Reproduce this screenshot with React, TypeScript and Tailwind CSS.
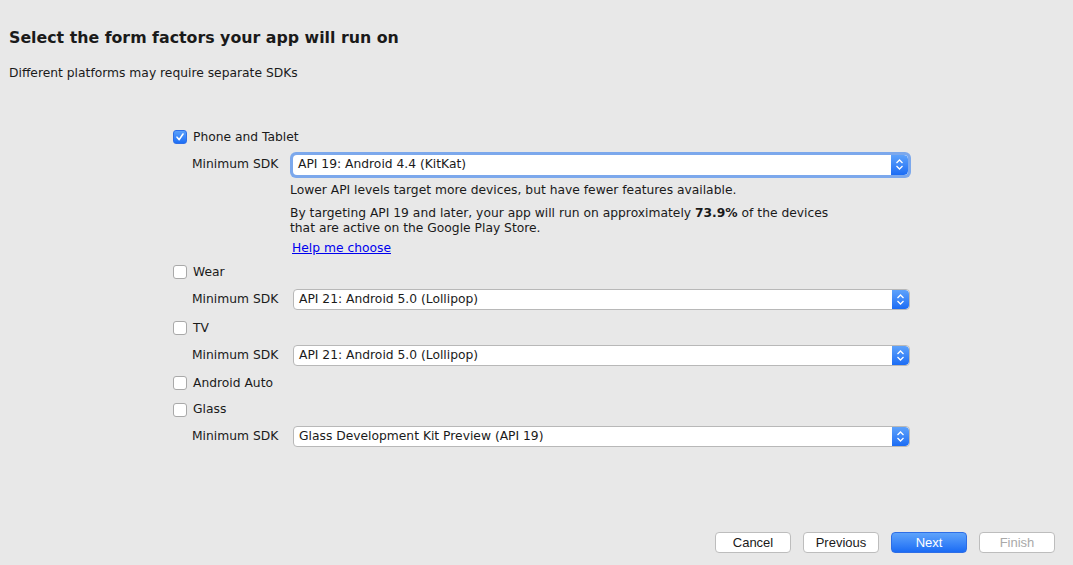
import React from "react";

const font = { fontFamily: '"DejaVu Sans", Verdana, sans-serif' };

function Checkbox({ checked }: { checked?: boolean }) {
  if (checked) {
    return (
      <div className="flex h-[14px] w-[14px] items-center justify-center rounded-[3px] border border-[#2f6fe8] bg-gradient-to-b from-[#5aa0fb] to-[#1c6ef5]">
        <svg width="10" height="10" viewBox="0 0 10 10">
          <path d="M2 5.2 L4.2 7.6 L8 2" fill="none" stroke="white" strokeWidth="1.6" strokeLinecap="round" strokeLinejoin="round" />
        </svg>
      </div>
    );
  }
  return <div className="h-[14px] w-[14px] rounded-[3px] border border-[#a9a9a9] bg-white" />;
}

function Arrows() {
  return (
    <div className="flex h-full w-[17px] items-center justify-center rounded-r-[4px] bg-gradient-to-b from-[#5ea2fb] to-[#1b6cf4]">
      <svg width="9" height="13" viewBox="0 0 9 13">
        <path d="M1.5 5 L4.5 2 L7.5 5 M1.5 8 L4.5 11 L7.5 8" fill="none" stroke="white" strokeWidth="1.3" />
      </svg>
    </div>
  );
}

function Select({ value, focused }: { value: string; focused?: boolean }) {
  if (focused) {
    return (
      <div className="ml-[10px] rounded-[6px] bg-[#7ca8ec] p-[3px]">
        <div className="flex h-[20px] w-[615px] items-center overflow-hidden rounded-[4px] bg-white">
          <span className="flex-1 pl-[5px] text-[12.3px] text-[#1a1a1a]">{value}</span>
          <Arrows />
        </div>
      </div>
    );
  }
  return (
    <div className="ml-[13px] flex h-[21px] w-[617px] items-center overflow-hidden rounded-[4px] border border-[#b8b8b8] bg-white">
      <span className="flex-1 pl-[5px] text-[12.3px] text-[#1a1a1a]">{value}</span>
      <Arrows />
    </div>
  );
}

function CheckRow({ label, checked, h }: { label: string; checked?: boolean; h: string }) {
  return (
    <div className={`flex items-center ${h}`}>
      <Checkbox checked={checked} />
      <span className="ml-[6px] text-[12.3px] text-[#1a1a1a]">{label}</span>
    </div>
  );
}

function SdkRow({ value, focused }: { value: string; focused?: boolean }) {
  return (
    <div className="flex h-[28px] items-center pl-[19px] pb-[1px]">
      <span className="w-[88px] whitespace-nowrap text-[12.3px] text-[#1a1a1a]">Minimum SDK</span>
      <Select value={value} focused={focused} />
    </div>
  );
}

function Button({ label, primary, disabled }: { label: string; primary?: boolean; disabled?: boolean }) {
  const base = "flex h-[21px] w-[76px] items-center justify-center rounded-[4px] text-[13px] pt-[1px]";
  if (primary) {
    return (
      <div className={`${base} border border-[#2e6ee6] bg-gradient-to-b from-[#5ea3fb] to-[#1a6bf4] text-white`} style={{ fontFamily: '"Liberation Sans", Arial, sans-serif' }}>
        {label}
      </div>
    );
  }
  return (
    <div
      className={`${base} border border-[#bdbdbd] bg-white ${disabled ? "text-[#a9a9a9]" : "text-[#1a1a1a]"}`}
      style={{ fontFamily: '"Liberation Sans", Arial, sans-serif' }}
    >
      {label}
    </div>
  );
}

export default function App() {
  return (
    <div className="flex h-[565px] w-[1073px] flex-col bg-[#e8e8e8]" style={font}>
      {/* Header */}
      <div className="pl-[9px] pt-[28px]">
        <h1 className="text-[15.8px] font-bold leading-[20px] text-[#1a1a1a]">Select the form factors your app will run on</h1>
        <p className="mt-[18px] text-[12.3px] leading-[15px] text-[#1a1a1a]">Different platforms may require separate SDKs</p>
      </div>

      {/* Form factors */}
      <div className="mt-[42px] pl-[173px]">
        <CheckRow label="Phone and Tablet" checked h="h-[28px]" />
        <SdkRow value="API 19: Android 4.4 (KitKat)" focused />
        <div className="pl-[117px] text-[12.3px] leading-[15px] text-[#1a1a1a]">
          <p className="mt-[4px]">Lower API levels target more devices, but have fewer features available.</p>
          <p className="mt-[8px]">
            By targeting API 19 and later, your app will run on approximately <b>73.9%</b> of the devices
            <br />
            that are active on the Google Play Store.
          </p>
          <a className="ml-[2px] mt-[5px] block w-fit text-[#0000ee] underline">Help me choose</a>
        </div>
        <div className="mt-[2px]">
          <CheckRow label="Wear" h="h-[28px]" />
          <SdkRow value="API 21: Android 5.0 (Lollipop)" />
          <CheckRow label="TV" h="h-[28px]" />
          <SdkRow value="API 21: Android 5.0 (Lollipop)" />
          <CheckRow label="Android Auto" h="h-[26px]" />
          <CheckRow label="Glass" h="h-[27px]" />
          <SdkRow value="Glass Development Kit Preview (API 19)" />
        </div>
      </div>

      {/* Footer */}
      <div className="mt-auto flex justify-end gap-[12px] pb-[12px] pr-[18px]">
        <Button label="Cancel" />
        <Button label="Previous" />
        <Button label="Next" primary />
        <Button label="Finish" disabled />
      </div>
    </div>
  );
}
